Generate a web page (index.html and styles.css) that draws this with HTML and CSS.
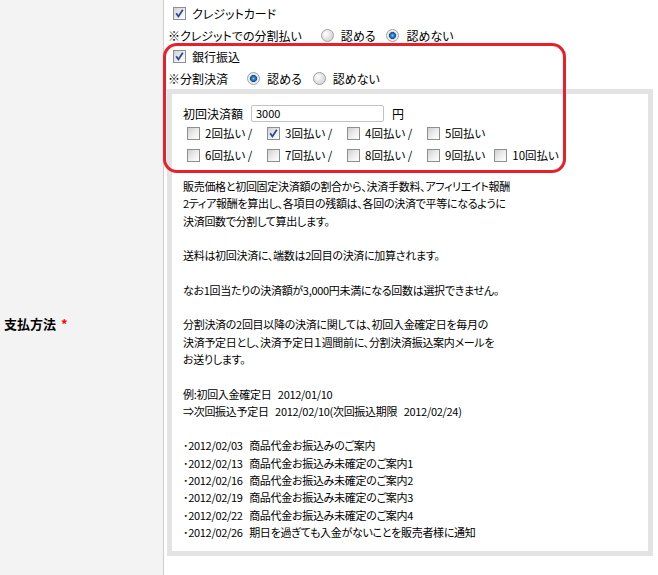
FILE: index.html
```html
<!DOCTYPE html>
<html lang="ja">

<head>
  <meta charset="UTF-8" />
  <title>支払方法</title>
  <link rel="stylesheet" href="styles.css">
</head>

<body>
  <div class="form-row">
    <div class="form-label">支払方法<span class="req">*</span></div>
    <div class="form-field">
      <div class="line">
        <span class="cb on"><svg viewBox="0 0 11 11"><path d="M2.2 5.2 L4.4 8.4 L8.8 1.8" /></svg></span>
        クレジットカード
      </div>
      <div class="line">
        ※クレジットでの分割払い
        <span class="rd first"></span>認める
        <span class="rd on"></span>認めない
      </div>
      <div class="line">
        <span class="cb on"><svg viewBox="0 0 11 11"><path d="M2.2 5.2 L4.4 8.4 L8.8 1.8" /></svg></span>
        銀行振込
      </div>
      <div class="line">
        ※分割決済
        <span class="rd first on"></span>認める
        <span class="rd"></span>認めない
      </div>

      <div class="note-box">
        <div class="amount">
          初回決済額<input type="text" value="3000">円
        </div>
        <div class="opts">
          <span class="opt"><span class="cb"></span>2回払い /</span>
          <span class="opt"><span class="cb on"><svg viewBox="0 0 11 11"><path d="M2.2 5.2 L4.4 8.4 L8.8 1.8" /></svg></span>3回払い /</span>
          <span class="opt"><span class="cb"></span>4回払い /</span>
          <span class="opt plain"><span class="cb"></span>5回払い</span>
        </div>
        <div class="opts">
          <span class="opt"><span class="cb"></span>6回払い /</span>
          <span class="opt"><span class="cb"></span>7回払い /</span>
          <span class="opt"><span class="cb"></span>8回払い /</span>
          <span class="opt plain"><span class="cb"></span>9回払い</span>
          <span class="opt plain"><span class="cb"></span>10回払い</span>
        </div>

        <p class="desc">
          販売価格と初回固定決済額の割合から、決済手数料、アフィリエイト報酬<br>
          2ティア報酬を算出し、各項目の残額は、各回の決済で平等になるように<br>
          決済回数で分割して算出します。<br>
          <br>
          送料は初回決済に、端数は2回目の決済に加算されます。<br>
          <br>
          なお1回当たりの決済額が3,000円未満になる回数は選択できません。<br>
          <br>
          分割決済の2回目以降の決済に関しては、初回入金確定日を毎月の<br>
          決済予定日とし、決済予定日１週間前に、分割決済振込案内メールを<br>
          お送りします。<br>
          <br>
          例:初回入金確定日&nbsp;&nbsp;&nbsp;2012/01/10<br>
          ⇒次回振込予定日&nbsp;&nbsp;&nbsp;2012/02/10(次回振込期限&nbsp;&nbsp;&nbsp;2012/02/24)<br>
          <br>
          ･2012/02/03&nbsp;&nbsp;&nbsp;商品代金お振込みのご案内<br>
          ･2012/02/13&nbsp;&nbsp;&nbsp;商品代金お振込み未確定のご案内1<br>
          ･2012/02/16&nbsp;&nbsp;&nbsp;商品代金お振込み未確定のご案内2<br>
          ･2012/02/19&nbsp;&nbsp;&nbsp;商品代金お振込み未確定のご案内3<br>
          ･2012/02/22&nbsp;&nbsp;&nbsp;商品代金お振込み未確定のご案内4<br>
          ･2012/02/26&nbsp;&nbsp;&nbsp;期日を過ぎても入金がないことを販売者様に通知
        </p>
      </div>

      <!-- 注釈の赤枠 -->
      <div class="annot"></div>
    </div>
  </div>
</body>

</html>
```

FILE: styles.css
```css
html,
body {
  margin: 0;
  overflow: hidden;
}

body {
  font-family: "Noto Sans CJK JP", sans-serif;
  font-size: 12px;
  font-feature-settings: "palt";
  color: #000;
  background-color: #fff;
}

/* 行レイアウト */
.form-row {
  display: flex;
  height: 646px;
}

.form-label {
  width: 159px;
  padding-left: 4px;
  flex-shrink: 0;
  display: flex;
  align-items: center;
  background-color: #f3f3f3;
  border-right: 1px solid #cfcfcf;
  font-weight: bold;
  font-size: 13px;
}

.form-label .req {
  color: #f00;
  margin-left: 5px;
}

.form-field {
  position: relative;
  flex: 1;
  padding: 3px 0 0 4px;
}

.line {
  display: flex;
  align-items: center;
  height: 21.5px;
  white-space: nowrap;
}

/* チェックボックス */
.cb {
  width: 13px;
  height: 13px;
  box-sizing: border-box;
  flex-shrink: 0;
  display: inline-flex;
  align-items: center;
  justify-content: center;
  border: 1px solid #8e8f8f;
  background: linear-gradient(135deg, #cfd0d3 0%, #eeeeee 55%, #fff 100%);
}

.cb svg {
  width: 11px;
  height: 11px;
}

.cb svg path {
  fill: none;
  stroke: #2c4899;
  stroke-width: 1.8;
}

.line .cb {
  margin: 0 6px 0 5px;
}

/* ラジオ */
.rd {
  width: 13px;
  height: 13px;
  box-sizing: border-box;
  flex-shrink: 0;
  border-radius: 50%;
  border: 1px solid #a0a0a0;
  background: radial-gradient(circle at 35% 35%, #fff 0, #e6e6e6 45%, #c9c9c9 100%);
  margin: 0 7px 0 11px;
}

.rd.first {
  margin-left: 19px;
}

.rd.on {
  background: radial-gradient(circle at 50% 50%, #7cc6f2 0, #2f7fc6 1.6px, #14509a 3.2px, #d8d8d8 3.8px, #f2f2f2 5px, #cfcfcf 100%);
}

/* 分割設定の枠 */
.note-box {
  width: 486px;
  box-sizing: border-box;
  margin-left: -1px;
  border: 5px solid #e3e3e3;
  padding: 10px 0 10px 11px;
}

.amount {
  display: flex;
  align-items: center;
  height: 18px;
}

.amount input {
  width: 133px;
  height: 17px;
  box-sizing: border-box;
  margin: 0 8px;
  padding: 0 4px;
  border: 1px solid #c2c2c2;
  border-radius: 2px;
  font-family: "Noto Sans CJK JP", sans-serif;
  font-size: 11px;
  color: #000;
}

.opts {
  display: flex;
  align-items: center;
  height: 22px;
  white-space: nowrap;
  font-size: 11.5px;
}

.opt {
  width: 80px;
  flex-shrink: 0;
  display: flex;
  align-items: center;
}

.opt .cb {
  margin: 0 5px 0 4px;
}

.opt.plain {
  width: auto;
  padding-right: 5px;
}

.desc {
  margin: 12px 0 0;
  font-size: 11px;
  letter-spacing: -0.3px;
  line-height: 17.3px;
  white-space: nowrap;
}

/* 赤枠 (注釈) */
.annot {
  position: absolute;
  left: -1px;
  top: 43px;
  width: 403px;
  height: 130px;
  box-sizing: border-box;
  border: 3px solid #e8202a;
  border-radius: 14px;
  pointer-events: none;
}
```
